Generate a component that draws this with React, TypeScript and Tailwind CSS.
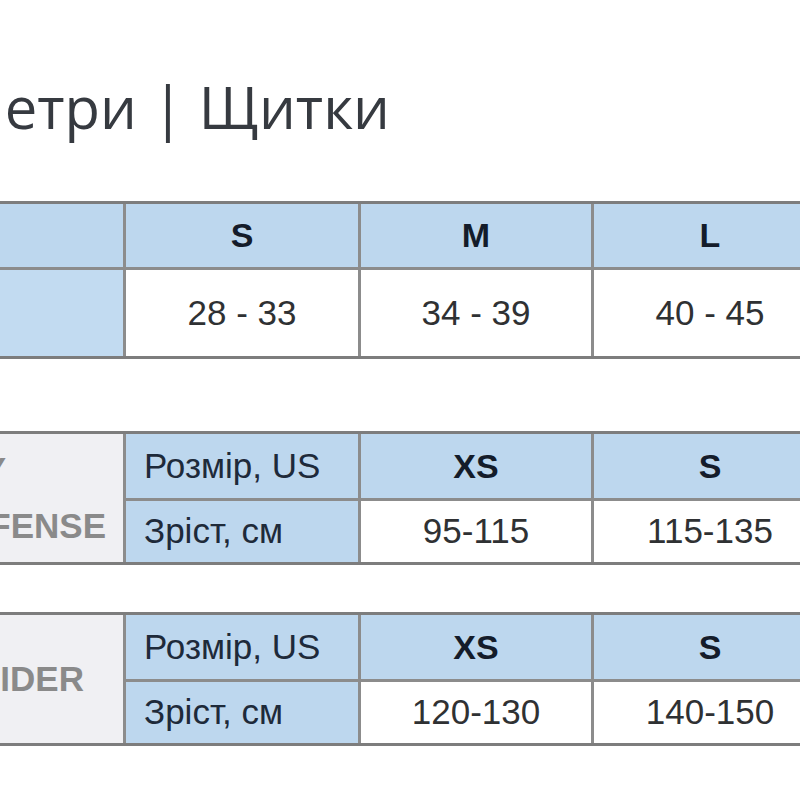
const BLUE = "bg-[#bdd7ee]";

const sizes = [
  { name: "S", range: "28 - 33" },
  { name: "M", range: "34 - 39" },
  { name: "L", range: "40 - 45" },
];

const guards = [
  {
    brand: ["SAFETY", "DEFENSE"],
    rows: [
      { name: "XS", height: "95-115" },
      { name: "S", height: "115-135" },
    ],
  },
  {
    brand: ["SLIDER"],
    rows: [
      { name: "XS", height: "120-130" },
      { name: "S", height: "140-150" },
    ],
  },
];

export default function App() {
  return (
    <div className="w-[800px] h-[800px] overflow-hidden bg-white font-['Liberation_Sans',Arial,sans-serif]">
      {/* Title, cut on the left like the screenshot */}
      <div className="pt-[67px] h-[201px]">
        <div className="w-[390px] flex justify-end overflow-hidden whitespace-nowrap font-['Open_Sans',sans-serif] text-[58px] leading-[80px] text-[#363a40]">
          Параметри | Щитки
        </div>
      </div>

      {/* Shoe size table */}
      <div className="-ml-[110px] w-[1100px] grid grid-cols-[233px_232px_230px_232px_233px] grid-rows-[63px_86px] gap-[3px] bg-[#8c8c8c] border-y-[3px] border-[#7d7d7d]">
        <div className={BLUE} />
        {sizes.map((s) => (
          <div key={s.name} className={`${BLUE} flex items-center justify-center font-bold text-[34px] text-[#141c2a]`}>
            {s.name}
          </div>
        ))}
        <div className={BLUE} />
        <div className="bg-[#c2dbf1]" />
        {sizes.map((s) => (
          <div key={s.range} className="bg-white flex items-center justify-center text-[35px] text-[#2f3133]">
            {s.range}
          </div>
        ))}
        <div className="bg-white" />
      </div>

      {/* Shin guard tables */}
      {guards.map((g, i) => (
        <div
          key={i}
          className={`${i === 0 ? "mt-[72px]" : "mt-[47px]"} -ml-[110px] w-[1100px] grid grid-cols-[233px_232px_230px_232px_233px] grid-rows-[64px_61px] gap-[3px] bg-[#8c8c8c] border-y-[3px] border-[#7d7d7d]`}
        >
          <div className="row-span-2 bg-[#f0f0f3] flex flex-col justify-center overflow-hidden whitespace-nowrap font-bold text-[35px] leading-[58px] text-[#8a8a8a]">
            {g.brand.length === 2 ? (
              <>
                <span className="flex justify-end pr-[117px] h-[56px]">{g.brand[0]}</span>
                <span className="flex justify-end pr-[17px]">{g.brand[1]}</span>
              </>
            ) : (
              <span className="flex justify-end pr-[39px]">{g.brand[0]}</span>
            )}
          </div>
          <div className={`${BLUE} flex items-center pl-[18px] text-[35px] text-[#1e2a3a]`}>Розмір, US</div>
          {g.rows.map((r) => (
            <div key={r.name} className={`${BLUE} flex items-center justify-center font-bold text-[34px] text-[#141c2a]`}>
              {r.name}
            </div>
          ))}
          <div className={BLUE} />
          <div className={`${BLUE} flex items-center pl-[18px] text-[35px] text-[#1e2a3a]`}>Зріст, см</div>
          {g.rows.map((r) => (
            <div key={r.height} className="bg-white flex items-center justify-center text-[35px] text-[#2f3133]">
              {r.height}
            </div>
          ))}
          <div className="bg-white" />
        </div>
      ))}
    </div>
  );
}
